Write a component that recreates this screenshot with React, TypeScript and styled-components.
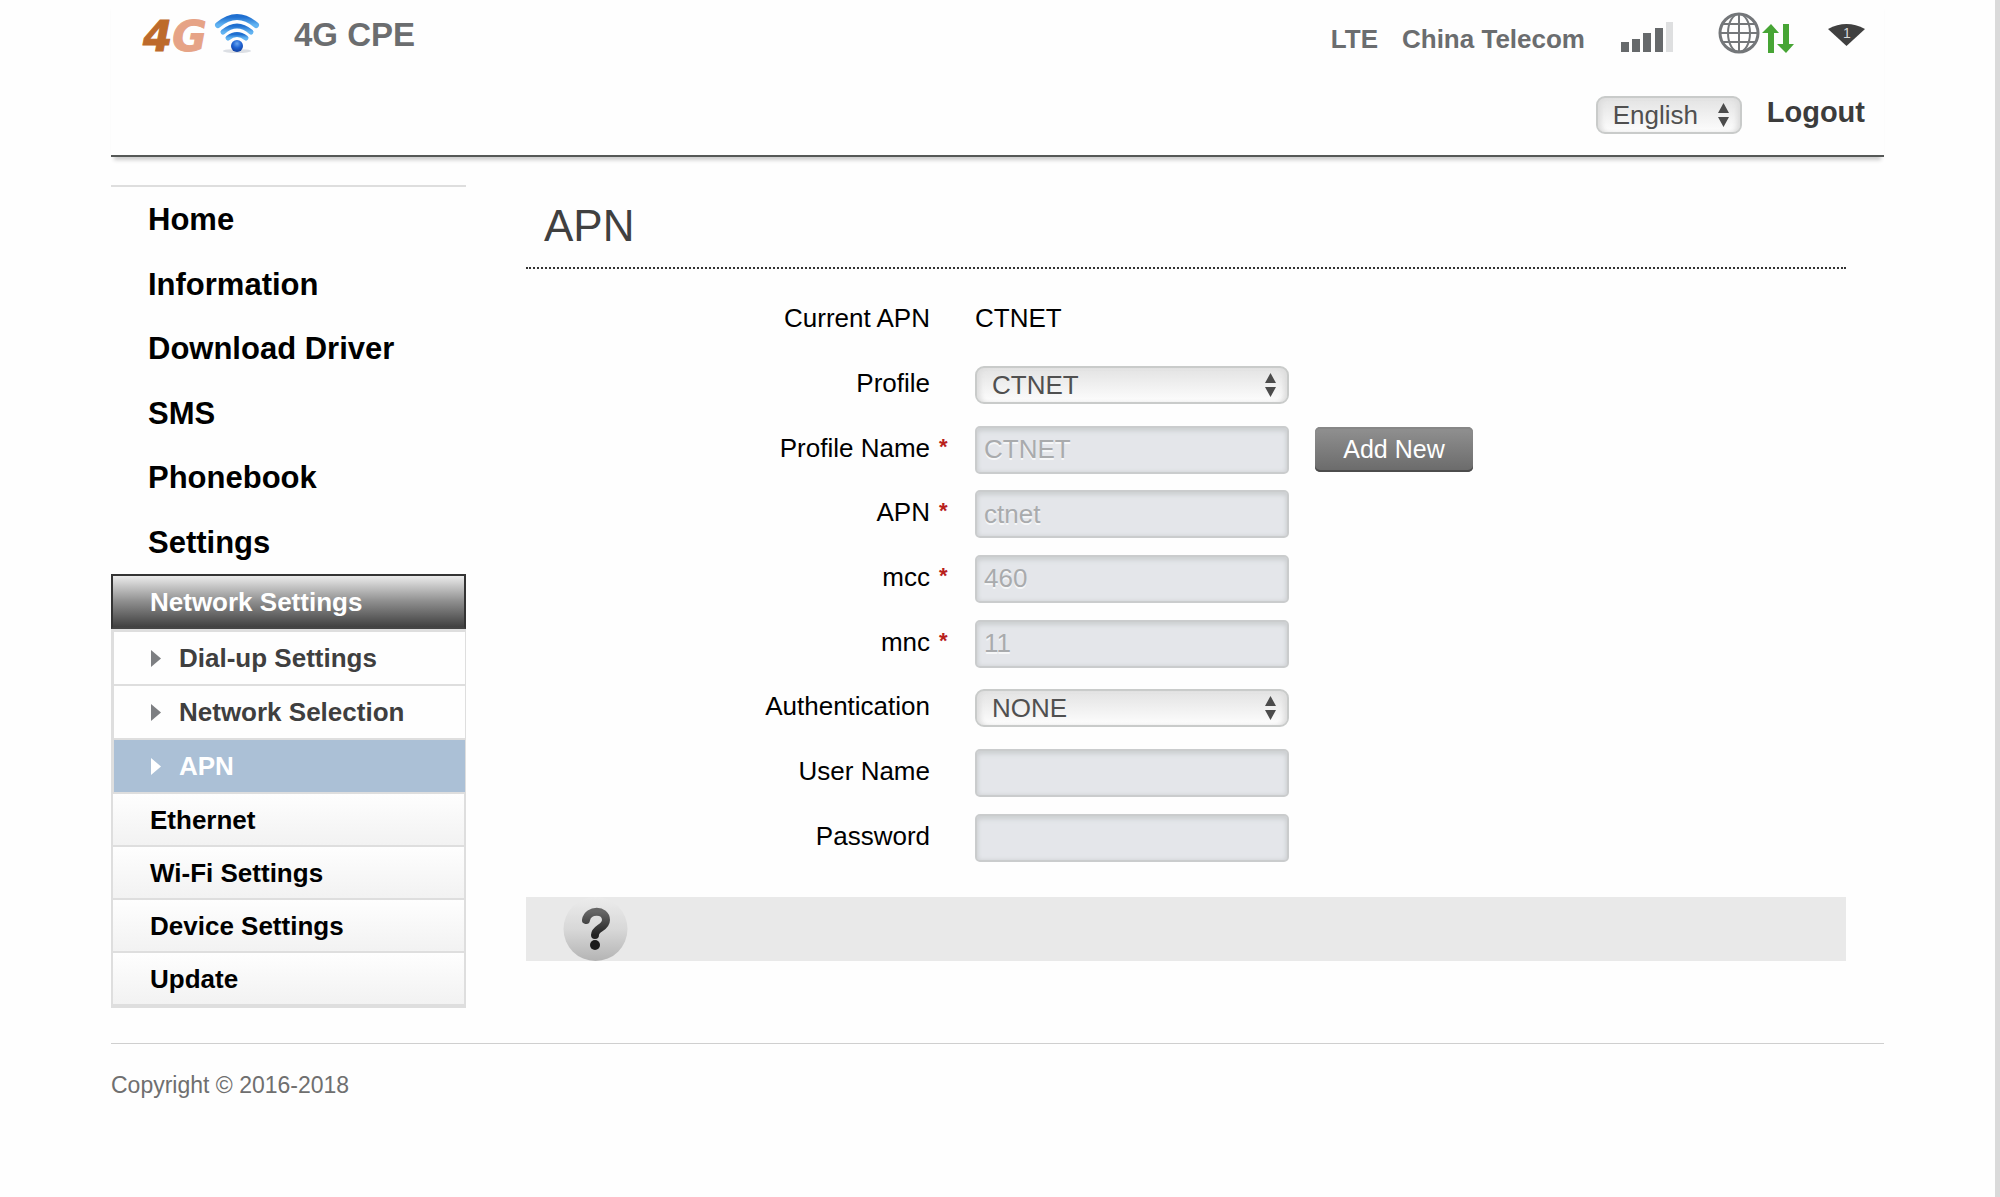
import React, { useState } from 'react';
import styled, { createGlobalStyle, css } from 'styled-components';

const GlobalStyle = createGlobalStyle`
  *, *::before, *::after { box-sizing: border-box; }
  body {
    margin: 0;
    background: #fefefe;
    color: #000;
    font: 26px/32px "Liberation Sans", Arial, Helvetica, sans-serif;
  }
  ul { list-style: none; margin: 0; padding: 0; }
  a { color: inherit; text-decoration: none; }
`;

const Page = styled.div`
  min-height: 100vh;
  border-right: 5px solid #dadada;
`;

const Container = styled.div`
  width: 100%;
  max-width: 1773px;
  margin: 0 auto;
`;

/* Header */

const Header = styled.header`
  display: flex;
  justify-content: space-between;
  height: 157px;
  padding: 0 19px 0 32px;
  border-bottom: 2px solid #555856;
  box-shadow: 0 6px 4px -3px rgba(0, 0, 0, 0.2);
`;

const Brand = styled.div`
  display: flex;
  align-items: flex-start;
  padding-top: 13px;
`;

const Logo = styled.span`
  display: flex;
  align-items: flex-start;
  justify-content: space-between;
  width: 117px;
  margin-right: 34px;
`;

const LogoText = styled.span`
  font: italic bold 42px/48px "DejaVu Sans", Verdana, sans-serif;
  color: #e6a386;
  -webkit-text-stroke: 1px;

  b { color: #bd6a2b; }
`;

const ProductName = styled.h1`
  margin: 0;
  font-size: 33px;
  line-height: 44px;
  color: #6b6d6f;
`;

const HeaderSide = styled.div`
  display: flex;
  flex-direction: column;
  align-items: flex-end;
  gap: 34px;
  padding-top: 12px;
`;

const StatusRow = styled.div`
  display: flex;
  align-items: flex-start;
  height: 50px;
  font-size: 26px;
  font-weight: bold;
  line-height: 54px;
  color: #6b6d6f;
  gap: 24px;
`;

const StatusIcons = styled.div`
  display: flex;
  align-items: flex-start;
  padding-left: 12px;
`;

const SignalIcon = styled.svg`
  margin: 10px 44px 0 0;
`;

const TrafficIcon = styled.svg`
  margin-right: 34px;
`;

const WifiClientsIcon = styled.svg`
  margin-top: 11px;
`;

const AccountRow = styled.div`
  display: flex;
  align-items: flex-start;
  gap: 25px;
`;

const LogoutLink = styled.a`
  font-size: 29px;
  font-weight: bold;
  line-height: 32px;
  color: #3c3c3c;
`;

/* Form controls */

const SelectFrame = styled.span<{ $width: number }>`
  display: grid;
  align-items: center;
  width: ${(p) => p.$width}px;
  height: 38px;

  > * { grid-area: 1 / 1; }
  > svg {
    justify-self: end;
    margin-right: 13px;
    pointer-events: none;
  }
`;

const SelectControl = styled.select`
  appearance: none;
  width: 100%;
  height: 38px;
  padding: 0 32px 0 15px;
  border: 2px solid #c9cbca;
  border-radius: 9px;
  background: linear-gradient(#e3e3e3, #f0f0f0 50%, #fdfdfd);
  box-shadow: inset 5px 0 5px -2px #dcdcdc, inset -5px 0 5px -2px #dcdcdc;
  color: #505050;
  font: inherit;
`;

const TextInput = styled.input`
  width: 314px;
  height: 48px;
  padding: 0 7px;
  border: 2px solid #cacccd;
  border-radius: 5px;
  background: #e4e6ea;
  box-shadow: inset 0 3px 5px #cdd0d2, inset 0 0 4px #d0d3d5;
  color: #a9abad;
  font: inherit;
  text-shadow: 0 2px 0 #f6f7f8;
`;

const Button = styled.button`
  min-width: 158px;
  height: 45px;
  padding: 0 20px 2px;
  border: 0;
  border-radius: 5px;
  background: linear-gradient(#919191, #6a6a6a);
  box-shadow: inset 0 -2px 0 #4c4c4c, inset 0 2px 1px #878787;
  color: #fff;
  font: inherit;
  font-size: 25px;
`;

/* Sidebar */

const Columns = styled.div`
  display: flex;
  align-items: flex-start;
  gap: 60px;
  padding-top: 28px;
`;

const Sidebar = styled.nav`
  flex: 0 0 355px;
  border-top: 2px solid #dedede;
  font-weight: bold;
`;

const MainMenu = styled.ul`
  display: grid;
  grid-auto-rows: 1fr;
  height: 387px;
  padding-left: 37px;
  font-size: 31px;
  line-height: 36px;
`;

const MainMenuItem = styled.li`
  display: flex;
  align-items: center;
  padding-top: 2px;
`;

const SectionHeading = styled.a`
  display: flex;
  align-items: center;
  height: 55px;
  padding-left: 37px;
  border: 2px solid #343434;
  border-bottom-color: #444;
  background: linear-gradient(#ebebeb, #8e8e8e 50%, #404040);
  color: #fff;
`;

const SubMenu = styled.ul`
  border: solid #dedede;
  border-width: 3px 1px 0 3px;
`;

const SubMenuLink = styled.a<{ $active?: boolean }>`
  display: flex;
  align-items: center;
  gap: 18px;
  height: 54px;
  padding-left: 37px;
  border-bottom: 2px solid #dedede;
  color: #3f3f3f;

  ${(p) => p.$active && css`
    background: #abc0d6;
    color: #fff;
  `}
`;

const SectionList = styled.ul`
  border: solid #dedede;
  border-width: 0 2px 2px;
`;

const SectionLink = styled.a`
  display: flex;
  align-items: center;
  height: 53px;
  padding-left: 37px;
  border-bottom: 2px solid #dedede;
  background: linear-gradient(#fefefe, #f2f2f2);
`;

/* Main panel */

const Main = styled.main`
  flex: 1;
  padding-right: 38px;
`;

const PanelTitle = styled.h2`
  margin: 0;
  padding: 16px 18px;
  border-bottom: 2px dotted #333;
  font-size: 44px;
  font-weight: normal;
  line-height: 50px;
  color: #404040;
`;

const Form = styled.form`
  display: grid;
  grid-auto-rows: 1fr;
  height: 582px;
  margin: 19px 0 27px;
`;

const FormRow = styled.div`
  display: grid;
  grid-template-columns: 404px 45px auto 1fr;
  align-items: center;
`;

const labelText = css`
  padding-bottom: 4px;
  text-align: right;
`;

const FieldLabel = styled.label`
  ${labelText}
`;

const StaticLabel = styled.span`
  ${labelText}
`;

const StaticValue = styled.output`
  padding-bottom: 4px;
`;

const Required = styled.span`
  padding: 0 0 6px 9px;
  font-size: 22px;
  font-weight: bold;
  color: #b8201c;
`;

const RowAction = styled.div`
  display: flex;
  padding-left: 26px;
`;

const HelpBar = styled.div`
  height: 64px;
  padding-left: 37px;
  background: #e9e9e9;
`;

const HelpButton = styled.button`
  display: block;
  padding: 0;
  border: 0;
  background: none;

  svg { display: block; }
`;

const Footer = styled.footer`
  margin-top: 35px;
  padding: 27px 0;
  border-top: 1px solid #cfcfcf;
  font-size: 23px;
  line-height: 28px;
  color: #6f6f6f;
`;

const WifiLogo = () => (
  <svg width="46" height="42" viewBox="0 0 46 42" aria-hidden="true">
    <defs>
      <linearGradient id="wave" x1="0" y1="0" x2="0" y2="1">
        <stop offset="0" stopColor="#1f6fd0" />
        <stop offset="1" stopColor="#62b4f2" />
      </linearGradient>
      <radialGradient id="ball" cx="0.5" cy="0.3" r="0.7">
        <stop offset="0" stopColor="#6aa5ee" />
        <stop offset="0.5" stopColor="#2064d4" />
        <stop offset="1" stopColor="#123f9e" />
      </radialGradient>
    </defs>
    <ellipse cx="23" cy="38" rx="14" ry="2" fill="#dcdfe4" />
    <g fill="none" stroke="url(#wave)" strokeLinecap="round">
      <path d="M4 12 Q23 -4 42 12" strokeWidth="6" />
      <path d="M9 19 Q23 7 37 19" strokeWidth="5" />
      <path d="M14 25 Q23 18 32 25" strokeWidth="5" />
    </g>
    <circle cx="23" cy="33" r="6" fill="url(#ball)" />
  </svg>
);

const SignalBars = () => (
  <SignalIcon width="53" height="31" viewBox="0 0 53 31" role="img" aria-label="Signal">
    <g fill="#66696b">
      <rect x="0" y="20" width="8" height="10" />
      <rect x="11" y="17" width="8" height="13" />
      <rect x="22" y="11" width="8" height="19" />
      <rect x="34" y="6" width="8" height="24" />
    </g>
    <rect x="45" y="0" width="7" height="30" fill="#dedfe0" />
  </SignalIcon>
);

const Traffic = () => (
  <TrafficIcon width="76" height="43" viewBox="0 0 76 43" role="img" aria-label="Connected">
    <g fill="none" stroke="#74777a" strokeWidth="2">
      <circle cx="21" cy="21" r="19" strokeWidth="3" />
      <ellipse cx="21" cy="21" rx="11" ry="19" />
      <path d="M21 2v38M2 21h38M5 12h32M5 30h32" />
    </g>
    <g fill="#47a535">
      <path d="M53 12 61 21H56V41H50V21H44Z" />
      <path d="M65 12h6v20h5l-8 9-9-9h6Z" />
    </g>
  </TrafficIcon>
);

const WifiClients = () => (
  <WifiClientsIcon width="37" height="23" viewBox="0 0 37 23" role="img" aria-label="Wi-Fi">
    <path d="M0 6Q18.500 -4 37 6L18.500 23Z" fill="#404040" />
    <text x="19" y="15" textAnchor="middle" fontSize="14" fontWeight="normal" fill="#d8d8d8">1</text>
  </WifiClientsIcon>
);

const Arrows = () => (
  <svg width="11" height="24" viewBox="0 0 11 24" aria-hidden="true">
    <path d="M5.500 0 11 10H0ZM5.500 24 0 14H11Z" fill="#4c4c4c" />
  </svg>
);

const Bullet = ({ color }: { color: string }) => (
  <svg width="10" height="17" viewBox="0 0 10 17" aria-hidden="true">
    <path d="M0 0 10 8.500 0 17Z" fill={color} />
  </svg>
);

const HelpIcon = () => (
  <svg width="65" height="64" viewBox="0 0 65 64" aria-hidden="true">
    <defs>
      <linearGradient id="disc" x1="0" y1="0" x2="0" y2="1">
        <stop offset="0" stopColor="#ececec" />
        <stop offset="0.5" stopColor="#d8d8d8" />
        <stop offset="1" stopColor="#b4b4b4" />
      </linearGradient>
      <linearGradient id="mark" x1="0" y1="0" x2="0" y2="1">
        <stop offset="0" stopColor="#666" />
        <stop offset="1" stopColor="#222" />
      </linearGradient>
    </defs>
    <circle cx="32.500" cy="32" r="32" fill="url(#disc)" />
    <path
      d="M23 23C25 12 43 12 43 23C43 31 32 31 32 38"
      fill="none"
      stroke="url(#mark)"
      strokeWidth="8"
      strokeLinecap="round"
    />
    <circle cx="32" cy="48" r="5" fill="#1c1c1c" />
  </svg>
);

interface SelectProps {
  id?: string;
  label?: string;
  width: number;
  options: string[];
}

const Select = ({ id, label, width, options }: SelectProps) => {
  const [value, setValue] = useState(options[0]);
  return (
    <SelectFrame $width={width}>
      <SelectControl id={id} aria-label={label} value={value} onChange={(e) => setValue(e.target.value)}>
        {options.map((o) => (
          <option key={o}>{o}</option>
        ))}
      </SelectControl>
      <Arrows />
    </SelectFrame>
  );
};

interface Field {
  id: string;
  label: string;
  required?: boolean;
  value?: string;
  options?: string[];
  type?: string;
  action?: string;
}

const fields: Field[] = [
  { id: 'profile', label: 'Profile', options: ['CTNET'] },
  { id: 'profile-name', label: 'Profile Name', required: true, value: 'CTNET', action: 'Add New' },
  { id: 'apn', label: 'APN', required: true, value: 'ctnet' },
  { id: 'mcc', label: 'mcc', required: true, value: '460' },
  { id: 'mnc', label: 'mnc', required: true, value: '11' },
  { id: 'auth', label: 'Authentication', options: ['NONE'] },
  { id: 'user', label: 'User Name', value: '' },
  { id: 'password', label: 'Password', value: '', type: 'password' },
];

const mainMenu = ['Home', 'Information', 'Download Driver', 'SMS', 'Phonebook', 'Settings'];
const subMenu = ['Dial-up Settings', 'Network Selection', 'APN'];
const sections = ['Ethernet', 'Wi-Fi Settings', 'Device Settings', 'Update'];

export default function App() {
  return (
    <Page>
      <GlobalStyle />
      <Container>
        <Header>
          <Brand>
            <Logo>
              <LogoText><b>4</b>G</LogoText>
              <WifiLogo />
            </Logo>
            <ProductName>4G CPE</ProductName>
          </Brand>
          <HeaderSide>
            <StatusRow>
              <span>LTE</span>
              <span>China Telecom</span>
              <StatusIcons>
                <SignalBars />
                <Traffic />
                <WifiClients />
              </StatusIcons>
            </StatusRow>
            <AccountRow>
              <Select label="Language" width={146} options={['English']} />
              <LogoutLink href="#logout">Logout</LogoutLink>
            </AccountRow>
          </HeaderSide>
        </Header>

        <Columns>
          <Sidebar>
            <MainMenu>
              {mainMenu.map((item) => (
                <MainMenuItem key={item}><a href="#menu">{item}</a></MainMenuItem>
              ))}
            </MainMenu>
            <SectionHeading href="#network">Network Settings</SectionHeading>
            <SubMenu>
              {subMenu.map((item) => (
                <li key={item}>
                  <SubMenuLink href="#network" $active={item === 'APN'}>
                    <Bullet color={item === 'APN' ? '#fff' : '#7d7f82'} />
                    {item}
                  </SubMenuLink>
                </li>
              ))}
            </SubMenu>
            <SectionList>
              {sections.map((item) => (
                <li key={item}><SectionLink href="#section">{item}</SectionLink></li>
              ))}
            </SectionList>
          </Sidebar>

          <Main>
            <PanelTitle>APN</PanelTitle>
            <Form onSubmit={(e) => e.preventDefault()}>
              <FormRow>
                <StaticLabel>Current APN</StaticLabel>
                <span />
                <StaticValue>CTNET</StaticValue>
              </FormRow>
              {fields.map((f) => (
                <FormRow key={f.id}>
                  <FieldLabel htmlFor={f.id}>{f.label}</FieldLabel>
                  <Required>{f.required ? '*' : ''}</Required>
                  {f.options ? (
                    <Select id={f.id} width={314} options={f.options} />
                  ) : (
                    <TextInput id={f.id} type={f.type ?? 'text'} defaultValue={f.value} disabled />
                  )}
                  {f.action && (
                    <RowAction><Button type="button">{f.action}</Button></RowAction>
                  )}
                </FormRow>
              ))}
            </Form>
            <HelpBar>
              <HelpButton type="button" aria-label="Help"><HelpIcon /></HelpButton>
            </HelpBar>
          </Main>
        </Columns>

        <Footer>Copyright © 2016-2018</Footer>
      </Container>
    </Page>
  );
}
